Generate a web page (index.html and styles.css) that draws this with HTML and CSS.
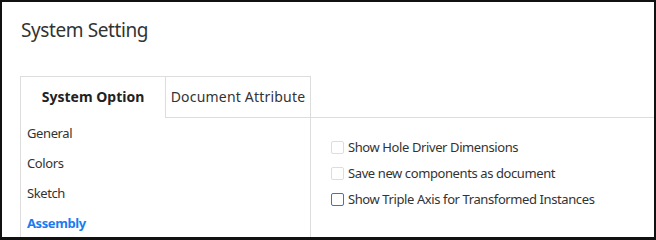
FILE: index.html
```html
<!DOCTYPE html>
<html lang="en">
<head>
    <title>System Setting</title>
    <link rel="stylesheet" href="styles.css">
</head>
<body>
    <div class="window">
        <div class="title">System Setting</div>

        <div class="panel">
            <div class="side">
                <div class="tabs">
                    <div class="tab active">System Option</div>
                    <div class="tab">Document Attribute</div>
                </div>
                <ul class="nav">
                    <li>General</li>
                    <li>Colors</li>
                    <li>Sketch</li>
                    <li class="selected">Assembly</li>
                </ul>
            </div>

            <div class="content">
                <label class="option disabled">
                    <span class="box"></span>
                    Show Hole Driver Dimensions
                </label>
                <label class="option disabled">
                    <span class="box"></span>
                    Save new components as document
                </label>
                <label class="option">
                    <span class="box"></span>
                    Show Triple Axis for Transformed Instances
                </label>
            </div>
        </div>
    </div>
</body>
</html>
```

FILE: styles.css
```css
/* 스타일링 */
html, body {
    margin: 0;
    height: 100%;
}

body {
    background-color: #111;
    font-family: "Noto Sans", "Open Sans", sans-serif;
    letter-spacing: -0.4px;
    color: #333;
    overflow: hidden;
}

.window {
    margin: 2px 2px 0 2px;
    height: 235px;
    background-color: #fff;
    overflow: hidden;
}

.title {
    height: 74px;
    padding-left: 19px;
    padding-top: 15px;
    box-sizing: border-box;
    font-size: 19px;
    line-height: 26px;
}

.panel {
    display: flex;
    align-items: flex-start;
    padding-left: 18px;
}

.side {
    width: 289px;
    border-top: 1px solid #ddd;
    border-left: 1px solid #ddd;
    border-right: 1px solid #ddd;
}

.tabs {
    display: flex;
}

.tab {
    width: 144px;
    height: 40px;
    line-height: 40px;
    text-align: center;
    font-size: 14px;
    letter-spacing: 0.2px;
    color: #333;
}

.tab.active {
    font-weight: bold;
    letter-spacing: 0;
    color: #222;
}

.tab + .tab {
    border-left: 1px solid #ddd;
    border-bottom: 1px solid #ddd;
}

.nav {
    list-style: none;
    margin: 0;
    padding: 0 0 20px 0;
}

.nav li {
    height: 30px;
    line-height: 30px;
    padding-left: 6px;
    font-size: 13px;
    color: #333;
}

.nav li.selected {
    color: #1a7cf0;
    font-weight: bold;
}

.content {
    flex: 1;
    margin-top: 41px;
    border-top: 1px solid #ddd;
    padding: 16px 0 0 20px;
}

.option {
    display: flex;
    align-items: center;
    height: 26px;
    font-size: 13px;
    color: #333;
}

.box {
    width: 11px;
    height: 11px;
    border: 1px solid #1a7cf0;
    border-radius: 2px;
    margin-right: 4px;
}

.option.disabled .box {
    border-color: #ddd;
}
```
